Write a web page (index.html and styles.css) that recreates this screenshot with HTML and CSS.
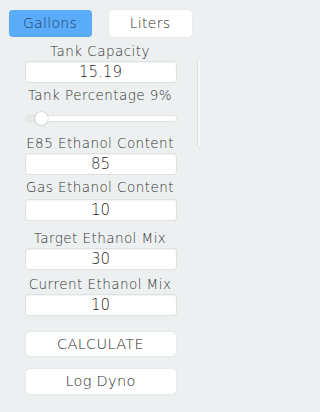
FILE: index.html
```html
<!DOCTYPE html>
<html>
<head>
<meta charset="utf-8">
<link rel="stylesheet" href="styles.css">
</head>
<body>
<div class="app">
  <div class="toggle">
    <div class="tbtn active">Gallons</div>
    <div class="tbtn">Liters</div>
  </div>
  <div class="label l1">Tank Capacity</div>
  <div class="field">15.19</div>
  <div class="label l2">Tank Percentage 9%</div>
  <div class="slider">
    <div class="track"><div class="fill" style="width:16px"></div></div>
    <div class="knob" style="left:10px"></div>
  </div>
  <div class="label l3">E85 Ethanol Content</div>
  <div class="field">85</div>
  <div class="label l4">Gas Ethanol Content</div>
  <div class="field">10</div>
  <div class="label l5">Target Ethanol Mix</div>
  <div class="field">30</div>
  <div class="label l6">Current Ethanol Mix</div>
  <div class="field">10</div>
  <div class="btn calc">CALCULATE</div>
  <div class="btn dyno">Log Dyno</div>
</div>
<div class="sidepanel"></div>
</body>
</html>
```
FILE: styles.css
```css
html, body {
  margin: 0;
  padding: 0;
  background: #edf0f0;
}
body {
  width: 200px;
  height: 412px;
  overflow: hidden;
  font-family: "DejaVu Sans", sans-serif;
  font-weight: 300;
  color: #333333;
  position: relative;
}
.app {
  display: flex;
  flex-direction: column;
  align-items: center;
  padding-top: 10px;
}
.toggle {
  display: flex;
  gap: 17px;
  width: 184px;
  margin-left: 1px;
}
.tbtn {
  width: 83px;
  height: 27px;
  line-height: 27px;
  text-align: center;
  font-size: 14px;
  letter-spacing: 0.3px;
  border-radius: 4px;
  background: #ffffff;
  color: #2a2a2a;
  box-shadow: 0 0 2px rgba(0,0,0,0.08);
}
.tbtn.active {
  background: #5aabf8;
  color: #1f4166;
}
.label {
  font-size: 13.5px;
  line-height: 16px;
  height: 16px;
  text-align: center;
  color: #333333;
  letter-spacing: 0.45px;
  white-space: nowrap;
}
.l1 { margin-top: 6px; }
.l2 { margin-top: 4px; }
.l3 { margin-top: 7px; }
.l4 { margin-top: 4px; }
.l5 { margin-top: 9px; }
.l6 { margin-top: 6px; }
.l4 + .field { margin-top: 4px; }
.l3 + .field { margin-top: 2px; }
.field {
  box-sizing: border-box;
  width: 152px;
  height: 22px;
  margin-top: 2px;
  margin-left: 1px;
  line-height: 21px;
  text-align: center;
  font-size: 15px;
  color: #2a2a2a;
  background: #ffffff;
  border: 1px solid #e0e2e2;
  border-radius: 3px;
  box-shadow: inset 0 1px 2px rgba(0,0,0,0.06);
}
.slider {
  position: relative;
  width: 152px;
  height: 20px;
  margin-top: 5px;
  margin-left: 1px;
}
.track {
  position: absolute;
  left: 0;
  right: 0;
  top: 7px;
  height: 7px;
  box-sizing: border-box;
  background: #ffffff;
  border: 1px solid #e2e4e4;
  border-radius: 3px;
  overflow: hidden;
}
.fill {
  height: 100%;
  background: #e6e8e8;
}
.knob {
  position: absolute;
  top: 4px;
  width: 13px;
  height: 13px;
  border-radius: 50%;
  background: #ffffff;
  box-shadow: 0 0 2px rgba(0,0,0,0.3);
}
.btn {
  box-sizing: border-box;
  width: 150px;
  text-align: center;
  font-size: 14.5px;
  letter-spacing: 0.3px;
  color: #2a2a2a;
  background: #ffffff;
  border-radius: 4px;
  box-shadow: 0 0 2px rgba(0,0,0,0.1);
  margin-left: 1px;
}
.calc {
  height: 24px;
  line-height: 24px;
  margin-top: 16px;
}
.dyno {
  height: 25px;
  line-height: 25px;
  margin-top: 13px;
}
.sidepanel {
  position: absolute;
  left: 197px;
  top: 58px;
  width: 20px;
  height: 88px;
  background: #f6f8f8;
  border: 1px solid #dde1e1;
  border-radius: 3px;
}
```
